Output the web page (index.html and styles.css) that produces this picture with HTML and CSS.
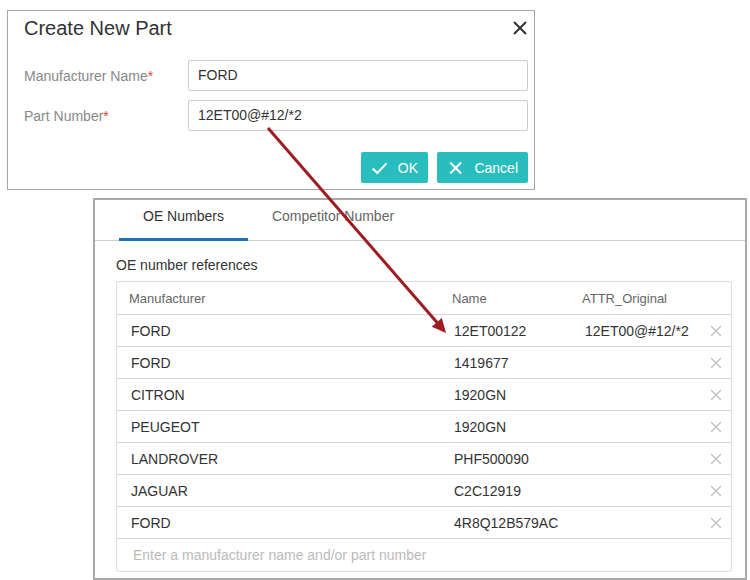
FILE: index.html
```html
<!DOCTYPE html>
<html>
<head>
<meta charset="utf-8">
<link rel="stylesheet" href="styles.css">
</head>
<body>
<div class="canvas">
  <div class="dialog">
    <div class="dlg-head">
      <div class="dlg-title">Create New Part</div>
      <svg class="dlg-close" width="16" height="16" viewBox="0 0 16 16"><path d="M2 2L14 14M14 2L2 14" stroke="#333" stroke-width="2" fill="none"/></svg>
    </div>
    <div class="form-row">
      <label class="lbl">Manufacturer Name<span class="req">*</span></label>
      <div class="inp">FORD</div>
    </div>
    <div class="form-row">
      <label class="lbl">Part Number<span class="req">*</span></label>
      <div class="inp">12ET00@#12/*2</div>
    </div>
    <div class="actions">
      <div class="btn btn-ok"><svg width="20" height="16" viewBox="0 0 20 16"><path d="M2 8.5L7.5 14L18.5 2.5" stroke="#fff" stroke-width="2.4" fill="none"/></svg><span>OK</span></div>
      <div class="btn btn-cancel"><svg width="16" height="16" viewBox="0 0 16 16"><path d="M1.5 1.5L14.5 14.5M14.5 1.5L1.5 14.5" stroke="#fff" stroke-width="2.4" fill="none"/></svg><span>Cancel</span></div>
    </div>
  </div>

  <div class="panel">
    <div class="tabs">
      <div class="tab active">OE Numbers</div>
      <div class="tab">Competitor Number</div>
    </div>
    <div class="section">
      <div class="sec-title">OE number references</div>
      <div class="table">
        <div class="row head">
          <div class="c c1">Manufacturer</div>
          <div class="c c2">Name</div>
          <div class="c c3">ATTR_Original</div>
          <div class="c c4"></div>
        </div>
        <div class="row">
          <div class="c c1">FORD</div><div class="c c2">12ET00122</div><div class="c c3">12ET00@#12/*2</div>
          <div class="c c4"><svg class="del" width="12" height="12" viewBox="0 0 12 12"><path d="M1 1L11 11M11 1L1 11"/></svg></div>
        </div>
        <div class="row">
          <div class="c c1">FORD</div><div class="c c2">1419677</div><div class="c c3"></div>
          <div class="c c4"><svg class="del" width="12" height="12" viewBox="0 0 12 12"><path d="M1 1L11 11M11 1L1 11"/></svg></div>
        </div>
        <div class="row">
          <div class="c c1">CITRON</div><div class="c c2">1920GN</div><div class="c c3"></div>
          <div class="c c4"><svg class="del" width="12" height="12" viewBox="0 0 12 12"><path d="M1 1L11 11M11 1L1 11"/></svg></div>
        </div>
        <div class="row">
          <div class="c c1">PEUGEOT</div><div class="c c2">1920GN</div><div class="c c3"></div>
          <div class="c c4"><svg class="del" width="12" height="12" viewBox="0 0 12 12"><path d="M1 1L11 11M11 1L1 11"/></svg></div>
        </div>
        <div class="row">
          <div class="c c1">LANDROVER</div><div class="c c2">PHF500090</div><div class="c c3"></div>
          <div class="c c4"><svg class="del" width="12" height="12" viewBox="0 0 12 12"><path d="M1 1L11 11M11 1L1 11"/></svg></div>
        </div>
        <div class="row">
          <div class="c c1">JAGUAR</div><div class="c c2">C2C12919</div><div class="c c3"></div>
          <div class="c c4"><svg class="del" width="12" height="12" viewBox="0 0 12 12"><path d="M1 1L11 11M11 1L1 11"/></svg></div>
        </div>
        <div class="row">
          <div class="c c1">FORD</div><div class="c c2">4R8Q12B579AC</div><div class="c c3"></div>
          <div class="c c4"><svg class="del" width="12" height="12" viewBox="0 0 12 12"><path d="M1 1L11 11M11 1L1 11"/></svg></div>
        </div>
        <div class="entry">Enter a manufacturer name and/or part number</div>
      </div>
    </div>
  </div>

  <svg class="arrow" width="750" height="580" viewBox="0 0 750 580">
    <line x1="268" y1="128" x2="437.5" y2="323" stroke="#9e1b20" stroke-width="3"/>
    <polygon points="446,333 431.8,326.8 441.8,318.1" fill="#9e1b20"/>
  </svg>
</div>
</body>
</html>
```
FILE: styles.css
```css
* { box-sizing: border-box; }
html, body { margin: 0; padding: 0; background: #fff; }
body { font-family: "Liberation Sans", Arial, sans-serif; color: #333; }
.canvas { position: relative; width: 750px; height: 580px; overflow: hidden; }

.dialog {
  margin: 10px 0 0 7px;
  width: 528px;
  height: 180px;
  border: 1px solid #a6a6a6;
  padding: 5px 6px 0 16px;
  background: #fff;
}
.dlg-head { display: flex; justify-content: space-between; align-items: center; height: 24px; margin-bottom: 20px; }
.dlg-title { font-size: 20px; line-height: 24px; color: #333; }
.form-row { display: flex; align-items: center; margin-bottom: 9px; }
.lbl { width: 164px; font-size: 14px; color: #888; }
.req { color: #e0452a; }
.inp {
  flex: 1;
  height: 31px;
  border: 1px solid #ccc;
  border-radius: 2px;
  padding: 0 9px;
  font-size: 14px;
  line-height: 29px;
  color: #333;
}
.actions { display: flex; justify-content: flex-end; gap: 9px; margin-top: 21px; }
.btn {
  display: flex; align-items: center; gap: 10px;
  height: 31px;
  background: #2abdbd;
  color: #fff;
  font-size: 14px;
  border-radius: 2px;
  padding: 0 10px 0 10px;
}
.btn-ok { width: 67px; }
.btn-cancel { width: 91px; gap: 12px; padding-left: 12px; }

.panel {
  margin: 8px 0 0 93px;
  width: 654px;
  height: 382px;
  border: 2px solid #a9a9a9;
  background: #fff;
}
.tabs { display: flex; padding-left: 24px; border-bottom: 1px solid #d0d0d0; height: 41px; }
.tab {
  padding: 8px 24px 13px;
  font-size: 14px;
  line-height: 17px;
  color: #666;
  border-bottom: 3px solid transparent;
  height: 41px;
}
.tab.active { color: #333; border-bottom-color: #1b72b6; }
.section { padding: 16px 13px 0 21px; }
.sec-title { font-size: 14px; line-height: 16px; color: #333; margin-bottom: 8px; }
.table { border: 1px solid #dcdcdc; border-radius: 3px; overflow: hidden; }
.row {
  display: grid;
  grid-template-columns: 323px 130px 130px 1fr;
  height: 32px;
  border-bottom: 1px solid #d6d6d6;
  align-items: center;
}
.row.head { height: 33px; }
.c { font-size: 14px; color: #333; padding-left: 14px; white-space: nowrap; }
.c2 { padding-left: 14px; }
.c3 { padding-left: 15px; }
.head .c { font-size: 13px; color: #666; padding-left: 12px; }
.c4 { display: flex; justify-content: center; padding-left: 0; }
.del path { stroke: #bdbdbd; stroke-width: 1.3; fill: none; }
.entry { height: 32px; line-height: 32px; padding-left: 16px; font-size: 14px; color: #bbb; }

.arrow { position: absolute; left: 0; top: 0; pointer-events: none; }
```
